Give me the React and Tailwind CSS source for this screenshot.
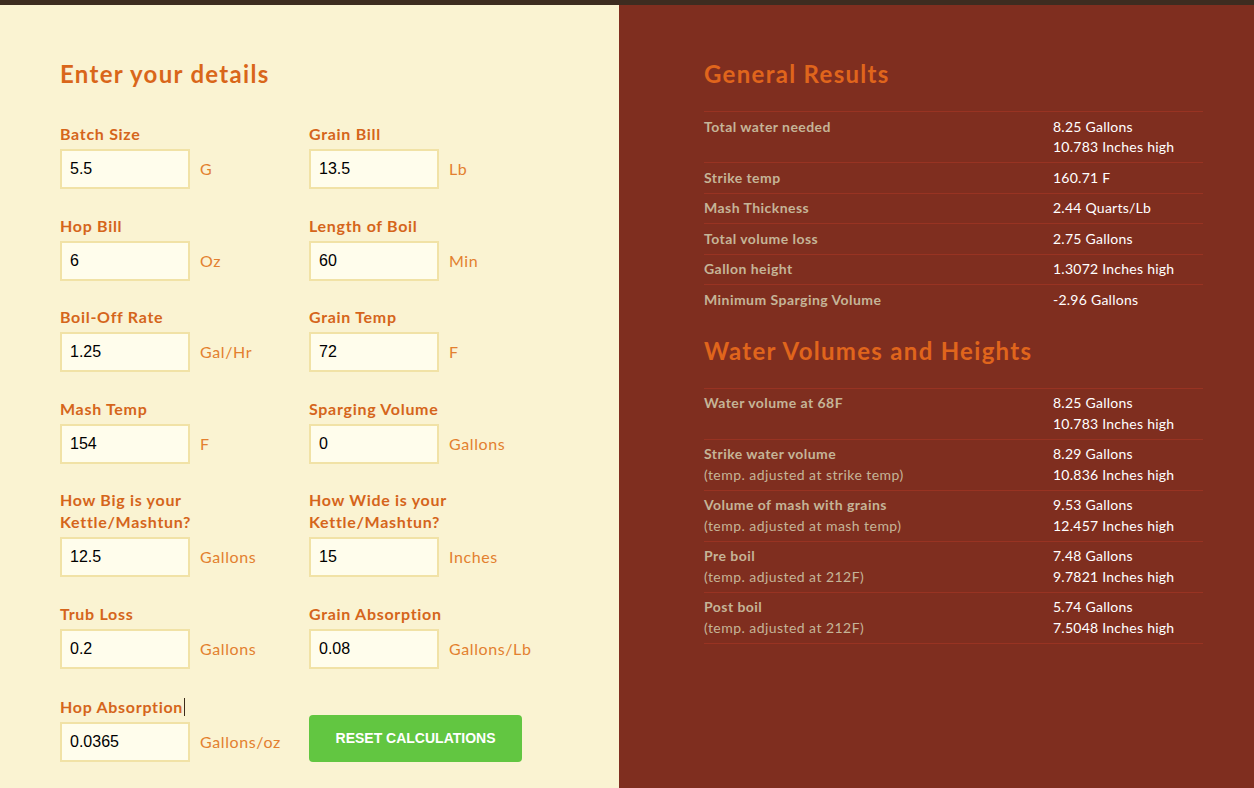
const fields = [
  { label: 'Batch Size', value: '5.5', unit: 'G' },
  { label: 'Grain Bill', value: '13.5', unit: 'Lb' },
  { label: 'Hop Bill', value: '6', unit: 'Oz' },
  { label: 'Length of Boil', value: '60', unit: 'Min' },
  { label: 'Boil-Off Rate', value: '1.25', unit: 'Gal/Hr' },
  { label: 'Grain Temp', value: '72', unit: 'F' },
  { label: 'Mash Temp', value: '154', unit: 'F' },
  { label: 'Sparging Volume', value: '0', unit: 'Gallons' },
  { label: ['How Big is your', 'Kettle/Mashtun?'], value: '12.5', unit: 'Gallons' },
  { label: ['How Wide is your', 'Kettle/Mashtun?'], value: '15', unit: 'Inches' },
  { label: 'Trub Loss', value: '0.2', unit: 'Gallons' },
  { label: 'Grain Absorption', value: '0.08', unit: 'Gallons/Lb' },
];

const general = [
  { label: 'Total water needed', values: ['8.25 Gallons', '10.783 Inches high'] },
  { label: 'Strike temp', values: ['160.71 F'] },
  { label: 'Mash Thickness', values: ['2.44 Quarts/Lb'] },
  { label: 'Total volume loss', values: ['2.75 Gallons'] },
  { label: 'Gallon height', values: ['1.3072 Inches high'] },
  { label: 'Minimum Sparging Volume', values: ['-2.96 Gallons'] },
];

const volumes = [
  { label: 'Water volume at 68F', values: ['8.25 Gallons', '10.783 Inches high'] },
  { label: 'Strike water volume', note: '(temp. adjusted at strike temp)', values: ['8.29 Gallons', '10.836 Inches high'] },
  { label: 'Volume of mash with grains', note: '(temp. adjusted at mash temp)', values: ['9.53 Gallons', '12.457 Inches high'] },
  { label: 'Pre boil', note: '(temp. adjusted at 212F)', values: ['7.48 Gallons', '9.7821 Inches high'] },
  { label: 'Post boil', note: '(temp. adjusted at 212F)', values: ['5.74 Gallons', '7.5048 Inches high'] },
];

function Field({ label, value, unit, caret }) {
  const lines = Array.isArray(label) ? label : [label];
  return (
    <div className="flex flex-col">
      <div className="mb-[4px] text-[16px] leading-[22px] font-bold tracking-[0.7px] text-[#d5651b]">
        {lines.map((l) => (
          <div key={l}>
            {l}
            {caret && <span className="ml-[1px] inline-block h-[18px] w-px translate-y-[3px] bg-[#3a2a1a]" />}
          </div>
        ))}
      </div>
      <div className="flex items-center">
        <input
          defaultValue={value}
          className="h-[40px] w-[130px] border-2 border-[#f1e2a6] bg-[#fffdec] px-[8px] text-[16px] text-black outline-none"
          style={{ fontFamily: '"Liberation Sans", Arial, sans-serif' }}
        />
        <span className="ml-[10px] text-[16px] tracking-[0.6px] text-[#e3802f]">{unit}</span>
      </div>
    </div>
  );
}

function ResultTable({ rows, lastBorder }) {
  return (
    <div className="border-t border-[#983322] text-[14px] leading-[20.5px]">
      {rows.map((r, i) => (
        <div
          key={r.label}
          className={`flex py-[4.5px] ${i < rows.length - 1 || lastBorder ? 'border-b border-[#983322]' : ''}`}
        >
          <div className="w-[349px] tracking-[0.45px]">
            <div className="font-bold text-[#c5b497]">{r.label}</div>
            {r.note && <div className="text-[#c5b497]">{r.note}</div>}
          </div>
          <div className="tracking-[0.25px] text-white">
            {r.values.map((v) => (
              <div key={v}>{v}</div>
            ))}
          </div>
        </div>
      ))}
    </div>
  );
}

export default function App() {
  return (
    <div className="flex h-[788px] flex-col overflow-hidden" style={{ fontFamily: 'Lato, "Open Sans", sans-serif' }}>
      <div className="h-[5px] bg-[#3d2c20]" />
      <div className="flex flex-1">
        <div className="w-[619px] bg-[#faf3d2] pl-[60px] pt-[53px]">
          <h1 className="mb-[33px] text-[24px] leading-[32px] font-bold tracking-[1.3px] text-[#d9661a]">
            Enter your details
          </h1>
          <div className="grid grid-cols-[249px_249px] gap-y-[25.6px]">
            {fields.map((f) => (
              <Field key={Array.isArray(f.label) ? f.label.join(' ') : f.label} {...f} />
            ))}
            <Field label="Hop Absorption" value="0.0365" unit="Gallons/oz" caret />
            <div className="flex items-end">
              <button
                className="h-[47px] w-[213px] rounded-[4px] bg-[#62c641] text-[14px] font-bold text-white uppercase"
                style={{ fontFamily: '"Liberation Sans", Arial, sans-serif' }}
              >
                Reset Calculations
              </button>
            </div>
          </div>
        </div>
        <div className="flex-1 bg-[#7f2e1f] pl-[85px] pt-[53px]">
          <div className="w-[499px]">
            <h2 className="mb-[21px] text-[24px] leading-[32px] font-bold tracking-[1.3px] text-[#e0651c]">
              General Results
            </h2>
            <ResultTable rows={general} />
            <h2 className="mt-[20px] mb-[21px] text-[24px] leading-[32px] font-bold tracking-[1.3px] text-[#e0651c]">
              Water Volumes and Heights
            </h2>
            <ResultTable rows={volumes} lastBorder />
          </div>
        </div>
      </div>
    </div>
  );
}
